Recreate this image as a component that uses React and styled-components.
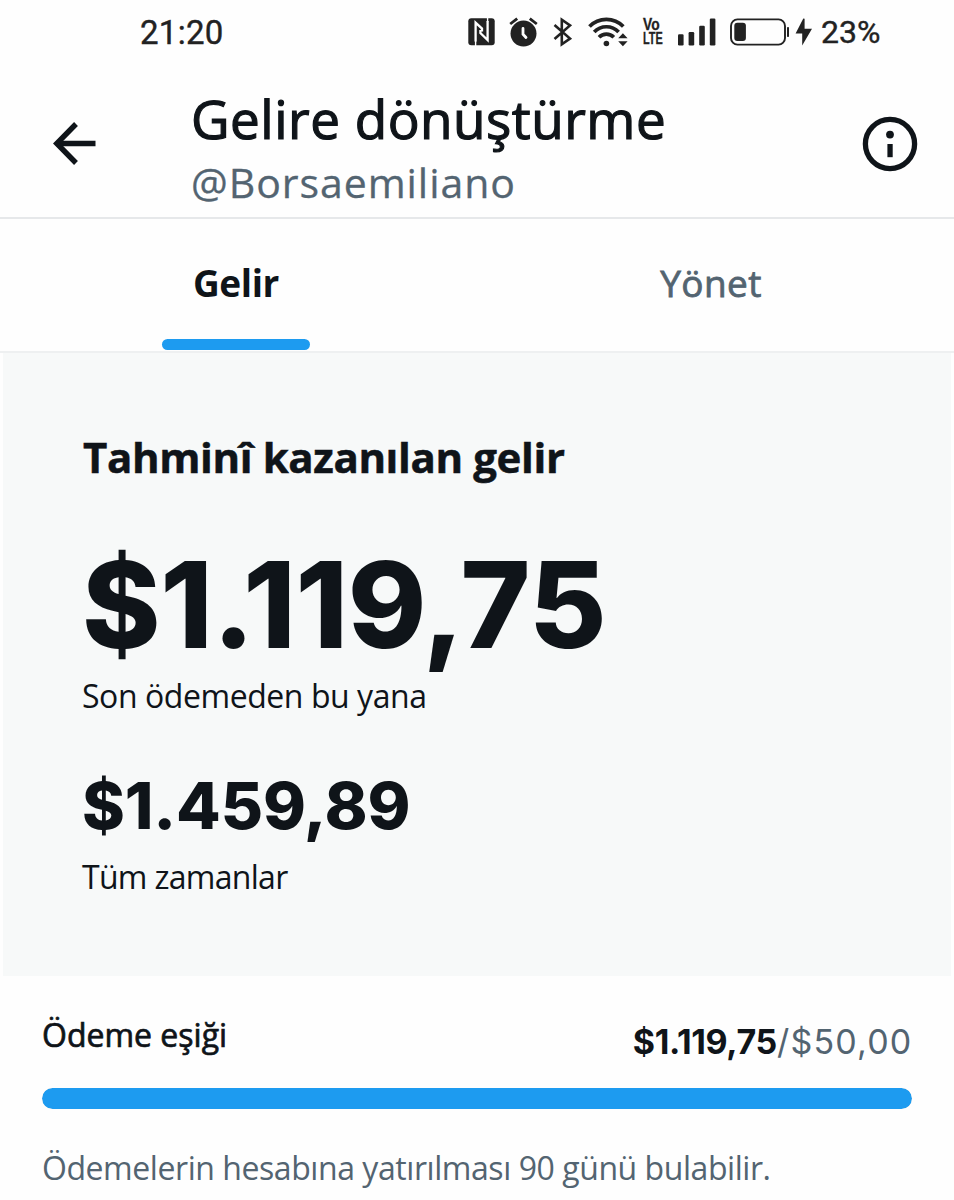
import React from 'react'
import styled, { createGlobalStyle } from 'styled-components';

const App = () => {
  return (
    <>
      <GlobalStyle />
      <Screen>
        <StatusBar />
        <Header />
        <Tabs>
          <Tab $active>
            <TabLabel $active>Gelir</TabLabel>
            <TabLine />
          </Tab>
          <Tab>
            <TabLabel>Yönet</TabLabel>
          </Tab>
        </Tabs>
        <RevenuePanel>
          <PanelTitle>Tahminî kazanılan gelir</PanelTitle>
          <Total>$1.119,75</Total>
          <Caption $spacing="-0.44px">Son ödemeden bu yana</Caption>
          <AllTime>$1.459,89</AllTime>
          <Caption $spacing="-0.7px">Tüm zamanlar</Caption>
        </RevenuePanel>
        <Payout earned={1119.75} limit={50} />
      </Screen>
    </>
  )
}

export default App;

const StatusBar = () => (
  <Status>
    <Clock>21:20</Clock>
    <StatusIcons>
      <NfcIcon />
      <AlarmIcon />
      <BluetoothIcon />
      <WifiIcon />
      <VoLte>
        <VoLteLine $stretch={0.86}>Vo</VoLteLine>
        <VoLteLine $stretch={0.68}>LTE</VoLteLine>
      </VoLte>
      <SignalIcon />
      <BatteryIcon />
      <BoltIcon />
      <Percent>23%</Percent>
    </StatusIcons>
  </Status>
)

const Header = () => (
  <HeaderBar>
    <IconButton aria-label="Geri">
      <svg width="43" height="43" viewBox="0 0 43 43" fill="none" stroke="#0f1419" strokeWidth="5.4">
        <path d="M23 2 L3.8 21.5 L23 41" />
        <path d="M4 21.5 H42.5" />
      </svg>
    </IconButton>
    <Titles>
      <Title>Gelire dönüştürme</Title>
      <Handle>@Borsaemiliano</Handle>
    </Titles>
    <IconButton aria-label="Bilgi">
      <svg width="56" height="56" viewBox="0 0 56 56">
        <circle cx="28" cy="28" r="24.6" fill="none" stroke="#0f1419" strokeWidth="5.3" />
        <circle cx="28" cy="18.6" r="3.9" fill="#0f1419" />
        <path d="M25.4 28h5.3v13.2h-5.3z" fill="#0f1419" />
      </svg>
    </IconButton>
  </HeaderBar>
)

const Payout = ({ earned, limit }) => {
  const percent = Math.min(100, (earned / limit) * 100);
  return (
    <PayoutSection>
      <PayoutRow>
        <PayoutLabel>Ödeme eşiği</PayoutLabel>
        <PayoutValue>
          <Earned>$1.119,75</Earned>
          <Limit>/$50,00</Limit>
        </PayoutValue>
      </PayoutRow>
      <Track>
        <Fill style={{ width: `${percent}%` }} />
      </Track>
      <Note>Ödemelerin hesabına yatırılması 90 günü bulabilir.</Note>
    </PayoutSection>
  )
}

const NfcIcon = () => (
  <svg width="28" height="28" viewBox="0 0 28 28">
    <rect x="0.3" y="0.3" width="26.4" height="27" rx="3" fill="#222" />
    <g fill="none" stroke="#fff" strokeWidth="2.3">
      <path d="M7.6 23.5 V4.6 L14 10.6 V13.6" />
      <path d="M19.6 3 V22 L12.4 15 V12" />
      <path d="M19.6 0 V4 M7.6 23 V28" strokeWidth="1.4" />
    </g>
  </svg>
)

const AlarmIcon = () => (
  <svg width="29" height="30" viewBox="0 0 29 30" fill="none">
    <circle cx="14.5" cy="16.6" r="13" fill="#222" />
    <path d="M1.2 7 L8.2 1.6 M27.8 7 L20.8 1.6" stroke="#222" strokeWidth="2.8" />
    <path d="M14 11.5 V17.2 L17 20.5" stroke="#fff" strokeWidth="2.8" strokeLinecap="round" />
  </svg>
)

const BluetoothIcon = () => (
  <svg width="20" height="30" viewBox="0 0 20 30" fill="none" stroke="#222" strokeWidth="2.6">
    <path d="M1.5 8 L17 21.6 L8.8 27.2 V2.8 L17 8.4 L1.5 22" />
  </svg>
)

const WifiIcon = () => (
  <svg width="40" height="30" viewBox="0 0 40 30" fill="none" stroke="#222" strokeWidth="3.7">
    <path d="M1.5 9.5 A23.5 23.5 0 0 1 35.3 9.5" />
    <path d="M6.2 15 A16.8 16.8 0 0 1 30.6 15" />
    <path d="M11 20.3 A10.3 10.3 0 0 1 25.8 20.3" />
    <circle cx="18.4" cy="26.5" r="2.8" fill="#222" stroke="none" />
    <path d="M30.2 21.3 L34.9 16.2 L39.6 21.3z M30.2 24.2 L34.9 29.3 L39.6 24.2z" fill="#222" stroke="none" />
  </svg>
)

const SignalIcon = () => (
  <svg width="38" height="28" viewBox="0 0 38 28" fill="#222">
    <rect x="0" y="16.2" width="5.6" height="11.2" rx="1.2" />
    <rect x="10.6" y="14" width="5.6" height="13.4" rx="1.2" />
    <rect x="21.2" y="7.8" width="5.6" height="19.6" rx="1.2" />
    <rect x="31.8" y="0.6" width="5.6" height="26.8" rx="1.2" />
  </svg>
)

const BatteryIcon = () => (
  <svg width="60" height="28" viewBox="0 0 60 28">
    <rect x="1" y="1.4" width="54" height="25.2" rx="6.5" fill="none" stroke="#222" strokeWidth="1.9" />
    <rect x="4.3" y="4.7" width="11.6" height="18.4" rx="3" fill="#222" />
    <rect x="57" y="9" width="2" height="10" rx="0.8" fill="#222" />
  </svg>
)

const BoltIcon = () => (
  <svg width="18" height="28" viewBox="0 0 18 28">
    <path d="M8.3 0.5 L0.6 15.4 H7.2 V27.5 L17 10.8 H9.6 V0.8z" fill="#222" />
  </svg>
)

const GlobalStyle = createGlobalStyle`
  * {
    box-sizing: border-box;
  }
  body {
    margin: 0;
    background: #fff;
    font-family: "Open Sans", "Liberation Sans", sans-serif;
    color: #0f1419;
  }
`;

const Screen = styled.main`
  width: 954px;
  height: 1200px;
  overflow: hidden;
  background: #fefefe;
  white-space: nowrap;
`;

const Status = styled.div`
  display: flex;
  justify-content: space-between;
  align-items: center;
  height: 64px;
  padding: 0 74px 0 140px;
  font-family: Roboto, sans-serif;
  color: #222;
`;

const Clock = styled.span`
  font-size: 33px;
  line-height: 64px;
  letter-spacing: 0.3px;
  padding-top: 2px;
  -webkit-text-stroke: 0.4px;
`;

const StatusIcons = styled.div`
  display: flex;
  align-items: center;
  svg {
    flex: none;
  }
  svg:nth-of-type(1) { margin-right: 13px; }
  svg:nth-of-type(2) { margin-right: 15px; }
  svg:nth-of-type(3) { margin-right: 15px; }
  svg:nth-of-type(4) { margin-right: 15px; }
  svg:nth-of-type(5) { margin-right: 14px; }
  svg:nth-of-type(6) { margin-right: 5px; }
`;

const VoLte = styled.span`
  display: flex;
  flex-direction: column;
  width: 21px;
  margin-right: 14px;
`;

const VoLteLine = styled.span`
  font-family: "Liberation Sans Narrow", "Liberation Sans", sans-serif;
  font-size: 16px;
  font-weight: 700;
  line-height: 14px;
  transform: scaleX(${({ $stretch }) => $stretch});
  transform-origin: left;
  -webkit-text-stroke: 0.3px;
`;

const Percent = styled.span`
  width: 59px;
  margin-left: 8px;
  font-size: 32px;
  line-height: 64px;
  -webkit-text-stroke: 0.4px;
`;

const HeaderBar = styled.header`
  display: flex;
  align-items: center;
  height: 155px;
  padding: 6px 36px 0 53px;
  border-bottom: 2px solid #e6e8ea;
`;

const IconButton = styled.button`
  display: flex;
  padding: 0;
  border: 0;
  background: none;
`;

const Titles = styled.div`
  flex: 1;
  padding: 10px 0 0 95px;
`;

const Title = styled.h1`
  margin: 0;
  font-size: 53px;
  font-weight: 500;
  line-height: 66px;
  letter-spacing: 0.5px;
  -webkit-text-stroke: 1.2px;
`;

const Handle = styled.div`
  font-size: 41px;
  line-height: 60px;
  letter-spacing: 0.95px;
  color: #536471;
  -webkit-text-stroke: 0.3px;
`;

const Tabs = styled.nav`
  display: grid;
  grid-template-columns: 472px 478px;
  height: 134px;
  border-bottom: 2px solid #eef0f1;
`;

const Tab = styled.div`
  display: flex;
  flex-direction: column;
  align-items: center;
  justify-content: space-between;
  padding: 34px 0 1px;
`;

const TabLabel = styled.span`
  font-size: 37px;
  font-weight: ${({ $active }) => ($active ? 700 : 500)};
  line-height: 60px;
  letter-spacing: ${({ $active }) => ($active ? '-0.4px' : '0.4px')};
  color: ${({ $active }) => ($active ? '#0f1419' : '#536471')};
  -webkit-text-stroke: ${({ $active }) => ($active ? '0' : '0.8px')};
`;

const TabLine = styled.span`
  width: 148px;
  height: 11px;
  border-radius: 6px;
  background: #1d9bf0;
`;

const RevenuePanel = styled.section`
  height: 623px;
  margin: 0 3px;
  padding: 74px 79px 0;
  background: #f7f9f9;
`;

const PanelTitle = styled.h2`
  margin: 0;
  padding-left: 1px;
  font-size: 42px;
  font-weight: 700;
  line-height: 60px;
  letter-spacing: -0.38px;
  -webkit-text-stroke: 0.5px;
`;

const Total = styled.div`
  margin-top: 53px;
  font-family: Inter, sans-serif;
  font-size: 119px;
  font-weight: 800;
  line-height: 130px;
  letter-spacing: -0.3px;
`;

const Caption = styled.div`
  margin-top: 2px;
  font-size: 32px;
  line-height: 48px;
  letter-spacing: ${({ $spacing }) => $spacing};
`;

const AllTime = styled.div`
  margin-top: 46px;
  font-family: Inter, sans-serif;
  font-size: 65px;
  font-weight: 800;
  line-height: 80px;
  letter-spacing: -0.15px;
  & + ${Caption} {
    margin-top: 7px;
  }
`;

const PayoutSection = styled.section`
  padding: 34px 42px 0;
`;

const PayoutRow = styled.div`
  display: flex;
  justify-content: space-between;
  height: 78px;
`;

const PayoutLabel = styled.span`
  font-size: 32px;
  font-weight: 500;
  line-height: 50px;
  -webkit-text-stroke: 0.7px;
`;

const PayoutValue = styled.span`
  font-family: Inter, sans-serif;
  font-size: 34px;
  line-height: 63px;
`;

const Earned = styled.strong`
  font-weight: 700;
  letter-spacing: -0.35px;
`;

const Limit = styled.span`
  letter-spacing: 1.2px;
  margin-right: -0.5px;
  color: #536471;
`;

const Track = styled.div`
  height: 21px;
  border-radius: 11px;
  overflow: hidden;
  background: #cfd9de;
`;

const Fill = styled.div`
  height: 100%;
  border-radius: 11px;
  background: #1d9bf0;
`;

const Note = styled.p`
  margin: 29px 0 0;
  font-size: 32px;
  line-height: 60px;
  letter-spacing: -0.44px;
  color: #536471;
`;
